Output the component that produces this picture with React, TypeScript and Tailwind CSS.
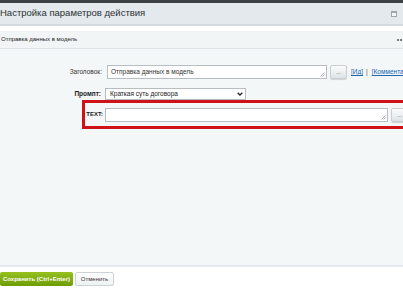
import React from "react";

function DotsButton({ className = "" }: { className?: string }) {
  return (
    <button
      className={`flex h-[14px] w-[17px] shrink-0 items-center justify-center rounded-[2px] border border-[#c9cfd1] bg-gradient-to-b from-[#fbfcfc] to-[#dde3e5] text-[6px] leading-none text-[#4b5254] shadow-[0_1px_1px_rgba(0,0,0,0.15)] ${className}`}
    >
      ...
    </button>
  );
}

function Grip() {
  return (
    <svg className="absolute bottom-[1px] right-[1px]" width="5" height="5" viewBox="0 0 5 5">
      <path d="M4.5 0.5 L0.5 4.5 M4.5 2.5 L2.5 4.5" stroke="#9aa0a3" strokeWidth="0.8" fill="none" />
    </svg>
  );
}

export default function App() {
  return (
    <div
      className="flex h-[294px] w-[403px] flex-col overflow-hidden bg-white"
      style={{ fontFamily: "'Liberation Sans', Arial, sans-serif" }}
    >
      <div className="h-[3px] shrink-0 bg-[#3d4246]" />

      <div className="flex h-[23px] shrink-0 items-center justify-between border-b-2 border-[#d3d9dc] bg-[#e3e9ec]">
        <span className="text-[9.5px] text-[#2c3135]">Настройка параметров действия</span>
        <span className="mr-[6px] h-[6px] w-[6px] border border-[#9ea6aa] border-t-2 bg-[#f4f6f7]" />
      </div>

      <div className="h-[5px] shrink-0 bg-white" />

      <div className="flex h-[18px] shrink-0 items-center justify-between border-b border-[#dfe4e6] bg-[#f2f5f6]">
        <span className="pl-[1px] text-[6px] text-[#222]">Отправка данных в модель</span>
        <span className="flex gap-[1px] pr-[1px]">
          <span className="h-[2px] w-[2px] rounded-full bg-[#555]" />
          <span className="h-[2px] w-[2px] rounded-full bg-[#555]" />
        </span>
      </div>

      <div className="flex flex-1 flex-col overflow-hidden border-b-2 border-[#e6eaf0] bg-[#f4f7f8] pt-[16px]">
        <div className="flex items-center">
          <span className="w-[102px] shrink-0 text-right text-[6.5px] text-[#333]">Заголовок:</span>
          <div className="relative ml-[5px] flex h-[14px] w-[220px] shrink-0 items-center border border-[#b7bdc0] bg-white pl-[3px] text-[6.5px] text-[#333]">
            Отправка данных в модель
            <Grip />
          </div>
          <DotsButton className="ml-[3px]" />
          <span className="ml-[4px] shrink-0 text-[6.5px] text-[#2067b0] underline">[Ид]</span>
          <span className="ml-[3px] shrink-0 text-[6.5px] text-[#555]">|</span>
          <span className="ml-[4px] shrink-0 whitespace-nowrap text-[6.5px] text-[#2067b0] underline">[Комментарий]</span>
        </div>

        <div className="mt-[9px] flex items-center">
          <span className="w-[101px] shrink-0 text-right text-[6.5px] font-bold text-[#222]">Промпт:</span>
          <div className="ml-[4px] flex h-[12px] w-[141px] shrink-0 items-center justify-between border border-[#b7bdc0] bg-white pl-[4px] pr-[2px] text-[6.5px] text-[#222]">
            Краткая суть договора
            <svg width="6" height="4" viewBox="0 0 6 4">
              <path d="M0.7 0.7 L3 3 L5.3 0.7" stroke="#222" strokeWidth="1.3" fill="none" />
            </svg>
          </div>
        </div>

        <div className="ml-[82px] mr-[-10px] flex h-[29px] items-center border-[3px] border-[#cf1118]">
          <span className="w-[18px] shrink-0 text-right text-[6px] font-bold text-[#222]">TEXT:</span>
          <div className="relative ml-[2px] h-[14px] w-[283px] shrink-0 border border-[#b7bdc0] bg-white">
            <Grip />
          </div>
          <DotsButton className="ml-[3px]" />
        </div>
      </div>

      <div className="flex h-[27px] shrink-0 items-start bg-white pt-[5px]">
        <button className="flex h-[14px] w-[73px] items-center justify-center rounded-[2px] bg-gradient-to-b from-[#97c11e] to-[#6f9c06] text-[6px] font-bold text-white">
          Сохранить (Ctrl+Enter)
        </button>
        <button className="ml-[2px] flex h-[14px] w-[39px] items-center justify-center rounded-[2px] border border-[#cdd2d4] bg-gradient-to-b from-[#ffffff] to-[#eef1f2] text-[6px] text-[#333]">
          Отменить
        </button>
      </div>
    </div>
  );
}
